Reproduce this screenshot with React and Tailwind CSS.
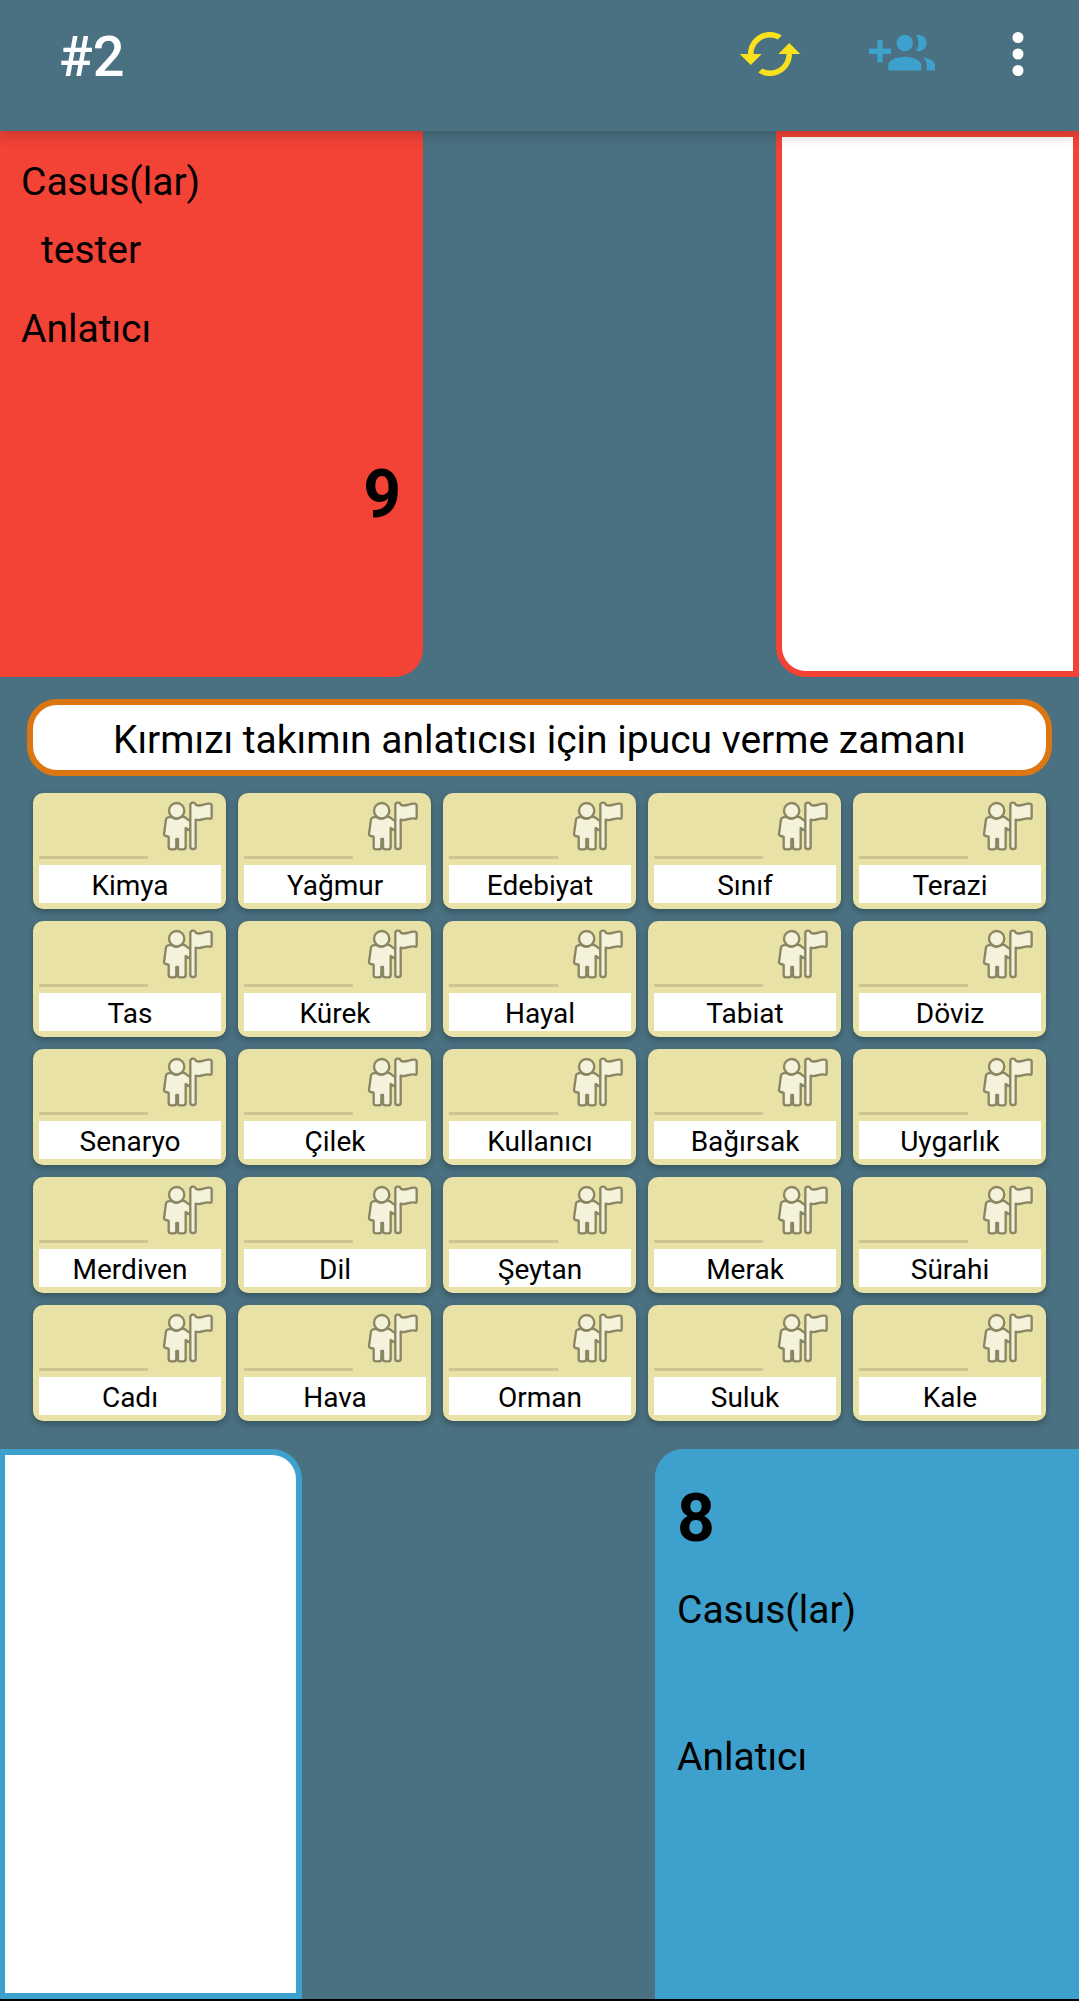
const rows = [
  ["Kimya", "Yağmur", "Edebiyat", "Sınıf", "Terazi"],
  ["Tas", "Kürek", "Hayal", "Tabiat", "Döviz"],
  ["Senaryo", "Çilek", "Kullanıcı", "Bağırsak", "Uygarlık"],
  ["Merdiven", "Dil", "Şeytan", "Merak", "Sürahi"],
  ["Cadı", "Hava", "Orman", "Suluk", "Kale"],
];

function RefreshIcon() {
  return (
    <svg viewBox="0 0 24 24" className="size-[66px]" fill="currentColor" aria-hidden="true">
      <path d="M19 8l-4 4h3c0 3.31-2.69 6-6 6-1.01 0-1.97-.25-2.8-.7l-1.46 1.46C8.97 19.54 10.43 20 12 20c4.42 0 8-3.58 8-8h3l-4-4zM6 12c0-3.31 2.69-6 6-6 1.01 0 1.97.25 2.8.7l1.46-1.46C15.03 4.46 13.57 4 12 4c-4.42 0-8 3.58-8 8H1l4 4 4-4H6z" />
    </svg>
  );
}

function GroupAddIcon() {
  return (
    <svg viewBox="0 0 24 24" className="size-[66px]" fill="currentColor" aria-hidden="true">
      <path d="M8 10H5V7H3v3H0v2h3v3h2v-3h3v-2zm10 1c1.66 0 2.99-1.34 2.99-3S19.66 5 18 5c-.32 0-.63.05-.91.14.57.81.9 1.79.9 2.86s-.34 2.04-.9 2.86c.28.09.59.14.91.14zm-5 0c1.66 0 2.99-1.34 2.99-3S14.66 5 13 5c-1.66 0-3 1.34-3 3s1.34 3 3 3zm6.62 2.16c.83.73 1.38 1.66 1.38 2.84v2h3v-2c0-1.54-2.37-2.49-4.38-2.84zM13 13c-2 0-6 1-6 3v2h12v-2c0-2-4-3-6-3z" />
    </svg>
  );
}

function MoreIcon() {
  return (
    <svg viewBox="0 0 24 24" className="size-[66px]" fill="currentColor" aria-hidden="true">
      <circle cx="12" cy="6" r="2" />
      <circle cx="12" cy="12" r="2" />
      <circle cx="12" cy="18" r="2" />
    </svg>
  );
}

function AgentIcon() {
  return (
    <svg
      viewBox="0 0 156 150"
      className="h-[50px] w-[52px]"
      fill="#f5f2dc"
      stroke="#8a8663"
      strokeWidth="7"
      strokeLinejoin="round"
      strokeLinecap="round"
      aria-hidden="true"
    >
      <path d="M19 49 C23 47 26 47 30 49 Q43 58 56 48 Q66 45 73 52 L86 62 V90 L71 81 V138 Q71 145 64 145 H55 Q48 145 48 138 V114 H43 V138 Q43 145 35 145 H27 Q20 145 20 138 V107 L11 105 Q6 104 6 99 L12 55 Q13 50 19 49 Z" />
      <circle cx="44" cy="29" r="23" />
      <path d="M101 11 C116 20 128 5 144 8 Q149 9 149 13 V49 Q149 54 144 53 C128 48 119 62 101 56 V138 Q101 144 95 144 H91 Q85 144 85 138 V12 Q85 5 93 5 Q100 5 101 11 Z" />
    </svg>
  );
}

function Card({ word }) {
  return (
    <button
      type="button"
      className="flex flex-col gap-[6px] rounded-[10px] bg-[#e8e2a6] py-[6px] pr-[5px] pl-[6px] shadow-[0_3px_6px_rgba(0,0,0,0.28)]"
    >
      <span className="flex w-full items-end">
        <span className="h-[3px] w-3/5 bg-[#cdc693]" />
        <span className="mr-[7px] ml-auto pt-[2px] pb-[8px]">
          <AgentIcon />
        </span>
      </span>
      <span className="block w-full bg-white pt-[4px] text-center text-[28px] leading-[34px] text-black">
        {word}
      </span>
    </button>
  );
}

export default function App() {
  return (
    <div className="flex min-h-screen flex-col border-b-2 border-black bg-[#4a7181] font-[Roboto,sans-serif] text-black">
      <header className="relative z-10 flex items-start bg-[#4a7181] pr-[11px] pb-[23px] pl-[59px] shadow-[0_4px_14px_rgba(0,0,0,0.2)]">
        <h1 className="pt-[6px] text-[56px] leading-[102px] font-medium text-white">#2</h1>
        <nav className="ml-auto flex">
          <button type="button" aria-label="Yenile" className="flex h-[108px] w-[132px] items-center justify-center text-[#f9e11b]">
            <RefreshIcon />
          </button>
          <button type="button" aria-label="Oyuncu ekle" className="flex h-[108px] w-[132px] items-center justify-center text-[#3ea0cc]">
            <GroupAddIcon />
          </button>
          <button type="button" aria-label="Menü" className="flex h-[108px] w-[100px] items-center justify-center text-white">
            <MoreIcon />
          </button>
        </nav>
      </header>

      <section className="grid min-h-[546px] grid-cols-[423fr_353fr_303fr]">
        <div className="rounded-br-[28px] bg-[#f34236] pt-[27px] pr-[22px] pl-[21px] text-[39px] leading-[48px]">
          <h2>Casus(lar)</h2>
          <p className="mt-[20px] pl-[20px]">tester</p>
          <h2 className="mt-[31px]">Anlatıcı</h2>
          <p className="mt-[103px] text-right text-[66px] leading-[78px] font-bold">9</p>
        </div>
        <div />
        <div className="rounded-bl-[30px] border-[6px] border-[#f34236] bg-white" />
      </section>

      <main className="px-[27px] pt-[22px] pb-[28px]">
        <p className="rounded-[30px] border-[6px] border-[#db7612] bg-white pt-[5px] text-center text-[39px] leading-[60px]">
          Kırmızı takımın anlatıcısı için ipucu verme zamanı
        </p>
        <div className="mt-[17px] grid grid-cols-5 gap-[12px] px-[6px]">
          {rows.flat().map((word) => (
            <Card key={word} word={word} />
          ))}
        </div>
      </main>

      <section className="grid grow grid-cols-[302fr_353fr_424fr]">
        <div className="rounded-tr-[30px] border-[6px] border-l-[5px] border-[#3ea0cc] bg-white" />
        <div />
        <div className="rounded-tl-[28px] bg-[#3ea0cc] px-[22px] pt-[31px] text-[39px] leading-[48px]">
          <p className="text-[66px] leading-[78px] font-bold">8</p>
          <h2 className="mt-[28px]">Casus(lar)</h2>
          <h2 className="mt-[99px]">Anlatıcı</h2>
        </div>
      </section>
    </div>
  );
}
